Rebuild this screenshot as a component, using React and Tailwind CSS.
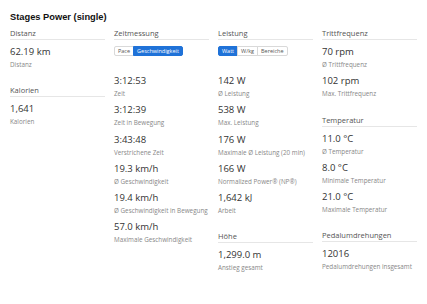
import React from 'react';

const sections = [
  [
    { title: 'Distanz', rows: [['62.19 km', 'Distanz']] },
    { title: 'Kalorien', rows: [['1,641', 'Kalorien']] },
  ],
  [
    {
      title: 'Zeitmessung',
      buttons: ['Pace', 'Geschwindigkeit'],
      active: 1,
      rows: [
        ['3:12:53', 'Zeit'],
        ['3:12:39', 'Zeit in Bewegung'],
        ['3:43:48', 'Verstrichene Zeit'],
        ['19.3 km/h', 'Ø Geschwindigkeit'],
        ['19.4 km/h', 'Ø Geschwindigkeit in Bewegung'],
        ['57.0 km/h', 'Maximale Geschwindigkeit'],
      ],
    },
  ],
  [
    {
      title: 'Leistung',
      buttons: ['Watt', 'W/kg', 'Bereiche'],
      active: 0,
      rows: [
        ['142 W', 'Ø Leistung'],
        ['538 W', 'Max. Leistung'],
        ['176 W', 'Maximale Ø Leistung (20 min)'],
        ['166 W', 'Normalized Power® (NP®)'],
        ['1,642 kJ', 'Arbeit'],
      ],
    },
    { title: 'Höhe', rows: [['1,299.0 m', 'Anstieg gesamt']] },
  ],
  [
    {
      title: 'Trittfrequenz',
      rows: [
        ['70 rpm', 'Ø Trittfrequenz'],
        ['102 rpm', 'Max. Trittfrequenz'],
      ],
    },
    {
      title: 'Temperatur',
      rows: [
        ['11.0 °C', 'Ø Temperatur'],
        ['8.0 °C', 'Minimale Temperatur'],
        ['21.0 °C', 'Maximale Temperatur'],
      ],
    },
    { title: 'Pedalumdrehungen', rows: [['12016', 'Pedalumdrehungen insgesamt']] },
  ],
];

function Section({ section, first }) {
  return (
    <div className={first ? '' : 'mt-4'}>
      <h3 className="text-[7.5px] leading-[10px] pb-px text-[#555] border-b border-[#e6e6e6] font-normal">
        {section.title}
      </h3>
      {section.buttons && (
        <div className="flex mt-[6px] mb-[13px]">
          {section.buttons.map((b, i) => (
            <span
              key={b}
              className={
                'h-[10px] px-[3px] text-[5.5px] leading-[8px] border ' +
                (i === section.active
                  ? 'bg-[#1f72d8] border-[#1f72d8] text-white'
                  : 'bg-white border-[#d9d9d9] text-[#555]') +
                (i === 0 ? ' rounded-l-[2px]' : ' -ml-px') +
                (i === section.buttons.length - 1 ? ' rounded-r-[2px]' : '')
              }
            >
              {b}
            </span>
          ))}
        </div>
      )}
      {section.rows.map(([value, label]) => (
        <div key={label} className="pt-[5px]">
          <div className="text-[9.5px] leading-[13px] text-[#333]">{value}</div>
          <div className="mt-[2px] text-[6.3px] leading-[9.3px] text-[#888] whitespace-nowrap">{label}</div>
        </div>
      ))}
    </div>
  );
}

export default function App() {
  return (
    <div className="w-[427px] h-[304px] bg-white px-[10px] pt-[11px] font-['Open_Sans',sans-serif]">
      <h1 className="text-[9.3px] leading-[12px] font-bold text-[#111] font-['Liberation_Sans',Arial,sans-serif]">
        Stages Power (single)
      </h1>
      <div className="grid grid-cols-4 gap-[9px] mt-[5px]">
        {sections.map((col, ci) => (
          <div key={ci} className="flex flex-col">
            {col.map((s, si) => (
              <Section key={s.title} section={s} first={si === 0} />
            ))}
          </div>
        ))}
      </div>
    </div>
  );
}
